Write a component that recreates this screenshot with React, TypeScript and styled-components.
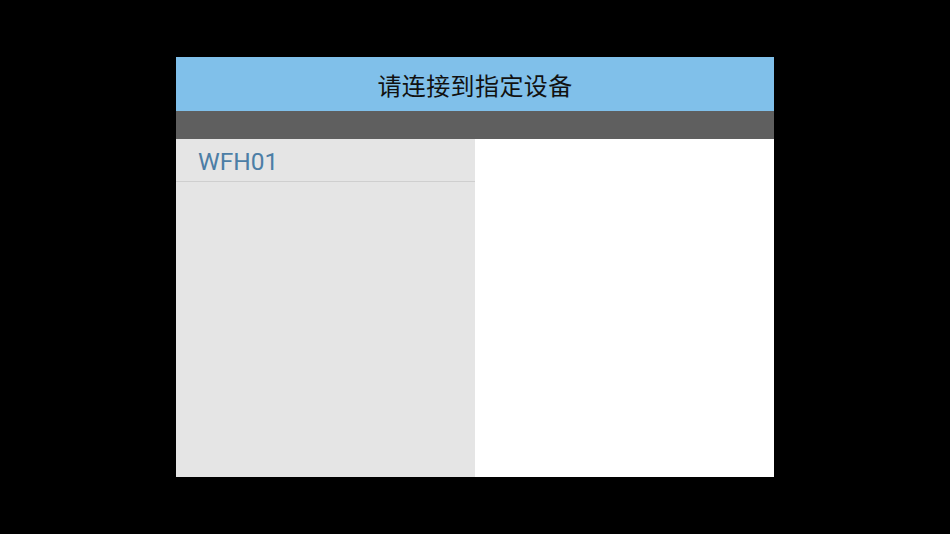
import styled, { createGlobalStyle } from "styled-components";

const GlobalStyle = createGlobalStyle`
  html, body {
    margin: 0;
    padding: 0;
    background: #000;
  }
  body {
    font-family: Roboto, "Noto Sans CJK SC", sans-serif;
  }
`;

const Screen = styled.div`
  width: 950px;
  height: 534px;
  background: #000;
  display: flex;
  justify-content: center;
  padding-top: 57px;
  box-sizing: border-box;
`;

const Dialog = styled.div`
  width: 598px;
  height: 420px;
  display: flex;
  flex-direction: column;
  background: #fff;
`;

const Header = styled.div`
  height: 54px;
  background: #80c0ea;
  display: flex;
  align-items: center;
  justify-content: center;
  font-family: "Noto Sans CJK SC", sans-serif;
  font-size: 24px;
  color: #111;
  letter-spacing: 0.4px;
`;

const SubBar = styled.div`
  height: 28px;
  background: #5f5f5f;
`;

const Body = styled.div`
  flex: 1;
  display: grid;
  grid-template-columns: 299px 1fr;
`;

const DeviceList = styled.ul`
  list-style: none;
  margin: 0;
  padding: 0;
  background: #e5e5e5;
`;

const DeviceItem = styled.li`
  height: 43px;
  box-sizing: border-box;
  display: flex;
  align-items: center;
  padding: 3px 0 0 22px;
  border-bottom: 1px solid #cfcfcf;
  font-family: Roboto, sans-serif;
  font-size: 24.5px;
  color: #4c7ea6;
`;

const Detail = styled.div`
  background: #fff;
`;

export default function App() {
  const devices = ["WFH01"];
  return (
    <>
      <GlobalStyle />
      <Screen>
        <Dialog>
          <Header>请连接到指定设备</Header>
          <SubBar />
          <Body>
            <DeviceList>
              {devices.map((d) => (
                <DeviceItem key={d}>{d}</DeviceItem>
              ))}
            </DeviceList>
            <Detail />
          </Body>
        </Dialog>
      </Screen>
    </>
  );
}
